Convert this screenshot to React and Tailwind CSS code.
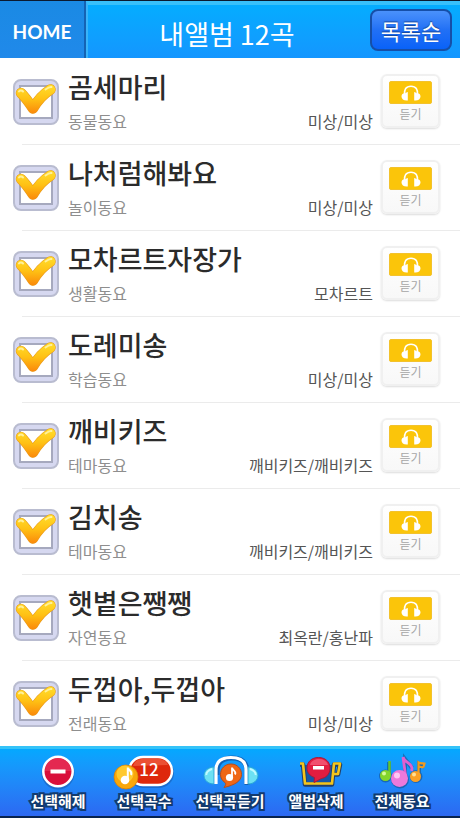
import { useState } from "react";

const SONGS = [
  { title: "곰세마리", genre: "동물동요", artist: "미상/미상" },
  { title: "나처럼해봐요", genre: "놀이동요", artist: "미상/미상" },
  { title: "모차르트자장가", genre: "생활동요", artist: "모차르트" },
  { title: "도레미송", genre: "학습동요", artist: "미상/미상" },
  { title: "깨비키즈", genre: "테마동요", artist: "깨비키즈/깨비키즈" },
  { title: "김치송", genre: "테마동요", artist: "깨비키즈/깨비키즈" },
  { title: "햇볕은쨍쨍", genre: "자연동요", artist: "최옥란/홍난파" },
  { title: "두껍아,두껍아", genre: "전래동요", artist: "미상/미상" },
];

function CheckMark() {
  return (
    <svg viewBox="0 0 46 46" className="pointer-events-none absolute inset-0 hidden size-full peer-checked:block" aria-hidden="true">
      <defs>
        <linearGradient id="gold" gradientUnits="userSpaceOnUse" x1="0" y1="5" x2="0" y2="35">
          <stop offset="0" stopColor="#ffe02e" />
          <stop offset="0.5" stopColor="#ffc114" />
          <stop offset="1" stopColor="#fa860a" />
        </linearGradient>
      </defs>
      <g fill="none" strokeLinecap="round" strokeLinejoin="round">
        <path d="M8 14C12 18 17 25 20 29.500C23 24 29 16 37.500 10.500" stroke="#e89a1c" strokeWidth="10.500" />
        <path d="M8 14C12 18 17 25 20 29.500C23 24 29 16 37.500 10.500" stroke="url(#gold)" strokeWidth="9.500" />
        <path d="M6 12.500C7 11 9 11.500 10 12.500M32.500 10.500C34.500 9 36.500 7.500 38.500 8" stroke="#fff09a" strokeWidth="2" />
      </g>
    </svg>
  );
}

function Headphones() {
  return (
    <svg viewBox="0 0 22 18" className="h-[18px] w-[22px]" aria-hidden="true">
      <path d="M4.500 11C4 5.500 6 2.200 11 2.200C16 2.200 18 5.500 17.500 11" fill="none" stroke="#fff" strokeWidth="1.600" />
      <path d="M7.800 8V16.500C4 17 1.500 15 1.500 12.500C1.500 10.500 3 9.300 4.500 9.300C5.800 9.300 6.500 8.300 7.800 8ZM14.200 8V16.500C18 17 20.500 15 20.500 12.500C20.500 10.500 19 9.300 17.500 9.300C16.200 9.300 15.500 8.300 14.200 8Z" fill="#fff" />
    </svg>
  );
}

function SongRow({ song, checked, onToggle }) {
  return (
    <li className="flex h-[86px] border-b border-transparent pl-[13px]">
      <label className="flex min-w-0 flex-1">
        <span className="relative mt-[21px] size-[46px] shrink-0">
          <input
            type="checkbox"
            checked={checked}
            onChange={onToggle}
            className="peer block size-full appearance-none rounded-lg border-2 border-[#b9bcd0] bg-[#d6d8f0]"
          />
          <span className="pointer-events-none absolute inset-[6px] border-2 border-[#a6a9be] bg-white" />
          <CheckMark />
        </span>
        <span className="ml-[9px] flex flex-col pt-[10px]">
          <span className="h-[41px] whitespace-nowrap text-[27px] leading-[38px] font-medium text-[#2b2b2b]">{song.title}</span>
          <span className="text-base leading-6 text-[#8e8e8e]">{song.genre}</span>
        </span>
      </label>
      <span className="mt-[51px] text-base leading-6 text-[#555]">{song.artist}</span>
      <button
        type="button"
        className="mt-4 mr-5 ml-2 flex h-[54px] w-[59px] flex-col items-center rounded-md border-2 border-[#f0f0f0] bg-gradient-to-b from-white to-[#f8f8f8] pt-[5px] shadow-[0_1px_2px_#dcdcdc]"
      >
        <span className="flex h-[23px] w-[43px] items-center justify-center rounded-xs border border-[#f3c22c] bg-[#fbc50a]">
          <Headphones />
        </span>
        <span className="text-xs leading-5 text-[#a6a6a6]">듣기</span>
      </button>
    </li>
  );
}

function DeselectIcon() {
  return (
    <svg viewBox="0 2 60 34" className="h-[34px] w-[60px] overflow-visible" aria-hidden="true">
      <circle cx="30" cy="18" r="16.500" fill="#1454a8" opacity="0.5" />
      <circle cx="30" cy="16.500" r="14.700" fill="#d90f3b" stroke="#fff" strokeWidth="2.500" />
      <path d="M17 16A13 13 0 0 1 43 16Z" fill="#f04468" opacity="0.5" />
      <rect x="22.500" y="14.500" width="15" height="4" fill="#fff" />
    </svg>
  );
}

function CountIcon({ count }) {
  return (
    <svg viewBox="0 0 60 34" className="h-[34px] w-[60px] overflow-visible" aria-hidden="true">
      <rect x="14" y="1" width="46" height="30" rx="15" fill="#1454a8" opacity="0.5" />
      <rect x="15" y="0" width="43" height="28" rx="14" fill="#de280c" stroke="#fff" strokeWidth="2.500" />
      <path d="M19 9C21 3 25 2 29 2H45C50 2 53 5 54 8Z" fill="#f46a50" opacity="0.6" />
      <circle cx="12" cy="20" r="12" fill="#f9a70b" stroke="#d98008" strokeWidth="0.800" />
      <circle cx="11" cy="17" r="8.500" fill="#ffc92e" />
      <circle cx="11" cy="23" r="4.300" fill="#fff" />
      <path d="M13.800 23V10.500C14 13 19 14 17 18" fill="none" stroke="#fff" strokeWidth="2" />
      <text x="35" y="19" textAnchor="middle" fontSize="17" fontWeight="500" fill="#fff">{count}</text>
    </svg>
  );
}

function ListenIcon() {
  return (
    <svg viewBox="-1 2 60 34" className="h-[34px] w-[60px] overflow-visible" aria-hidden="true">
      <path d="M16 20V16C16 7 22 3 31 3C40 3 46 7 46 16V30" fill="none" stroke="#1262b5" strokeWidth="5" />
      <path d="M13 12V29C7 29 3 25 3 20.500C3 16 7 12 13 12ZM47 12V29C53 29 57 25 57 20.500C57 16 53 12 47 12Z" fill="#6ce0f3" stroke="#28a8d8" strokeWidth="1" />
      <path d="M11 14C7 15 5 18 5.500 20M49 14C53 15 55 18 54.500 20" fill="none" stroke="#c0faff" strokeWidth="2" />
      <path d="M15 29V15C15 6 21 2.500 30 2.500C39 2.500 45 6 45 15V29" fill="none" stroke="#fff" strokeWidth="3.200" />
      <path d="M30 9C36 9 40.500 13.500 40.500 19.500C40.500 26 34 30 23 32.500C25 30 25 28.500 24 27.500C21 25.500 19.500 23 19.500 19.500C19.500 13.500 24 9 30 9Z" fill="#ef6715" stroke="#b94c16" strokeWidth="1" />
      <circle cx="28.500" cy="22.500" r="3.600" fill="#fff" />
      <path d="M31 22V12.500C31 15 36 16 34 19.500" fill="none" stroke="#fff" strokeWidth="1.800" />
    </svg>
  );
}

function DeleteIcon() {
  return (
    <svg viewBox="0 0 60 34" className="h-[34px] w-[60px] overflow-visible" aria-hidden="true">
      <path d="M14 8H17L19 27H46L48 8Z" fill="#1458a8" />
      <path d="M14 7.500H17L19 27.500H46L48 7.500H54L52 17.500H47" fill="none" stroke="#223f68" strokeWidth="4.500" strokeLinejoin="round" />
      <path d="M14 6.500H17L19 26.500H46L48 6.500H54L52 17H47" fill="none" stroke="#f3c51c" strokeWidth="2.600" strokeLinejoin="round" />
      <path d="M32.500 0.500C39.500 0.500 44 5 44 11C44 18 39 21 35.500 21.500L28 25.500L28.500 20.500C24 19 21 15.500 21 11C21 5 25.500 0.500 32.500 0.500Z" fill="#e31d40" stroke="#a51b3a" strokeWidth="1" />
      <path d="M24 8C25 4 29 2 33 2C38 2 41 4.500 42 8Z" fill="#f76682" opacity="0.7" />
      <rect x="27" y="9" width="11" height="3.500" fill="#fff" />
    </svg>
  );
}

function NotesIcon() {
  return (
    <svg viewBox="0 2 60 34" className="h-[34px] w-[60px] overflow-visible" aria-hidden="true">
      <g fill="none" stroke="#17508d" strokeWidth="4" opacity="0.6">
        <circle cx="13.500" cy="21" r="4.500" />
        <circle cx="28" cy="24.500" r="7" />
        <circle cx="44" cy="21.500" r="4.500" />
        <path d="M17 19V7M33 22V4L40 13M47 20V9L52 12" />
      </g>
      <path d="M17.500 20V6" stroke="#66c52c" strokeWidth="2.500" />
      <circle cx="13.500" cy="20.500" r="5.500" fill="#83d52b" />
      <circle cx="12" cy="18.500" r="2" fill="#d7fa9a" />
      <path d="M46.500 22V7.500C48.500 9 51 8 52.500 8.500L51.500 12M47 11C48 13 50 11 51.500 13" fill="none" stroke="#f09a1f" strokeWidth="2.200" />
      <circle cx="43.500" cy="21.500" r="5.500" fill="#f9a126" />
      <circle cx="42" cy="19.500" r="2" fill="#ffe096" />
      <path d="M34 24L31 2C32 8 42 8 39.500 16" fill="none" stroke="#df60cf" strokeWidth="2.800" />
      <circle cx="27.500" cy="23.500" r="8.500" fill="#ed79db" />
      <circle cx="25" cy="20.500" r="3" fill="#ffc6f5" />
    </svg>
  );
}

function ToolButton({ label, children }) {
  return (
    <button type="button" className="flex flex-1 flex-col items-center pt-2">
      {children}
      <span className="whitespace-nowrap text-[15px] leading-5 font-bold text-white [-webkit-text-stroke:4px_#123a6e] [paint-order:stroke_fill]">
        {label}
      </span>
    </button>
  );
}

export default function App() {
  const [selected, setSelected] = useState(() => SONGS.map(() => true));
  const toggle = (index) => setSelected((list) => list.map((on, i) => (i === index ? !on : on)));

  return (
    <div className="flex min-h-screen flex-col bg-white font-['Noto_Sans_CJK_KR',sans-serif]">
      <header className="flex h-[58px] border-t border-[#0b1a30] bg-gradient-to-b from-[#04aeff] to-[#1496ff]">
        <button
          type="button"
          className="w-[86px] border-r-2 border-[#1463b4] bg-gradient-to-b from-[#1a8ae4] to-[#2089ea] pt-[6px] font-['Lato',sans-serif] text-[19px] font-bold text-white"
        >
          HOME
        </button>
        <div className="flex flex-1 items-center border-t-4 border-l-2 border-t-[#38c0fb] border-l-[#38b4fa] pr-2">
          <h1 className="flex-1 pt-1 pr-1 text-center text-[27px] leading-10 text-white">내앨범 12곡</h1>
          <button
            type="button"
            className="mb-1 h-[42px] w-[82px] rounded-lg border-2 border-[#164fa8] bg-gradient-to-b from-[#4a91fb] via-[#2170f5] to-[#0862f8] text-[22px] leading-8 text-white [text-shadow:0_-1px_1px_#174596]"
          >
            목록순
          </button>
        </div>
      </header>

      <main className="flex-1">
        <ul>
          {SONGS.map((song, index) => (
            <div key={song.title} className="contents">
              {index > 0 && <li aria-hidden="true" className="-mb-px ml-[22px] h-px bg-[#ebebeb]" />}
              <SongRow song={song} checked={selected[index]} onToggle={() => toggle(index)} />
            </div>
          ))}
        </ul>
      </main>

      <footer className="flex h-[72px] border-t-3 border-b-2 border-t-[#35c3f8] border-b-[#08234f] bg-gradient-to-b from-[#04a8ff] to-[#2c68f2] px-[15px]">
        <ToolButton label="선택해제"><DeselectIcon /></ToolButton>
        <ToolButton label="선택곡수"><CountIcon count={12} /></ToolButton>
        <ToolButton label="선택곡듣기"><ListenIcon /></ToolButton>
        <ToolButton label="앨범삭제"><DeleteIcon /></ToolButton>
        <ToolButton label="전체동요"><NotesIcon /></ToolButton>
      </footer>
    </div>
  );
}
